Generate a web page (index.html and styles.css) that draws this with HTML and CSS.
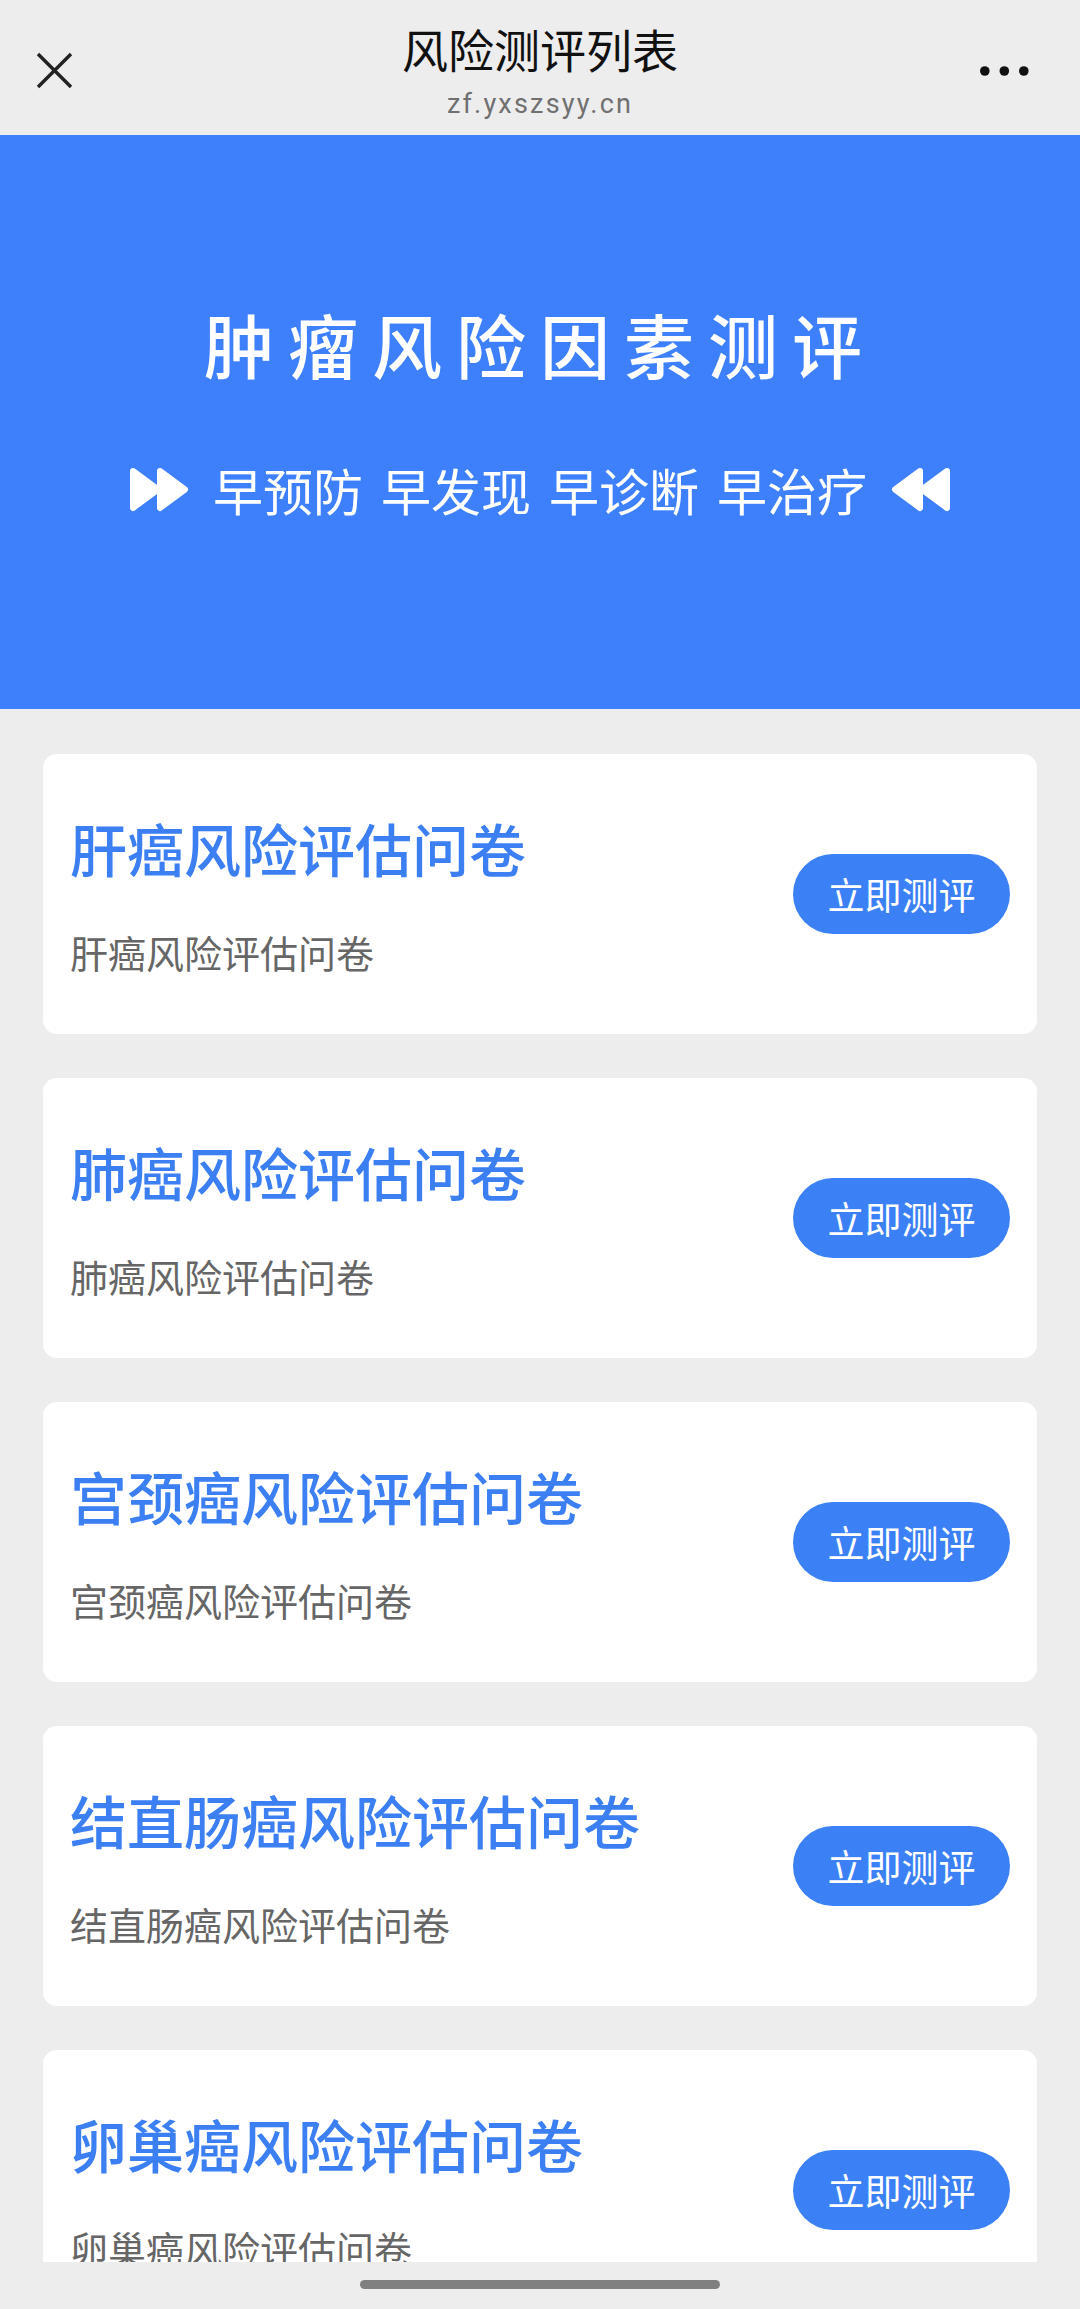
FILE: index.html
```html
<!DOCTYPE html>
<html lang="zh-CN">
<head>
<meta charset="utf-8">
<title>风险测评列表</title>
<link rel="stylesheet" href="styles.css">
</head>
<body>
<div class="screen">
  <header class="topbar">
    <div class="tb-left">
      <svg class="icon-close" width="37" height="37" viewBox="0 0 37 37"><path d="M2 2 L35 35 M35 2 L2 35" stroke="#222" stroke-width="3.4" fill="none"/></svg>
    </div>
    <div class="tb-center">
      <div class="tb-title">风险测评列表</div>
      <div class="tb-url">zf.yxszsyy.cn</div>
    </div>
    <div class="tb-right">
      <svg class="icon-more" width="49" height="10" viewBox="0 0 49 10"><circle cx="4.8" cy="5" r="4.8" fill="#111"/><circle cx="24.3" cy="5" r="4.8" fill="#111"/><circle cx="43.8" cy="5" r="4.8" fill="#111"/></svg>
    </div>
  </header>

  <section class="banner">
    <h1 class="banner-title">肿瘤风险因素测评</h1>
    <div class="banner-sub">
      <svg class="ff" width="60" height="45" viewBox="0 0 60 45"><path d="M4 4 L29 22.5 L4 41 Z M31 4 L56 22.5 L31 41 Z" fill="#fff" stroke="#fff" stroke-width="6" stroke-linejoin="round"/></svg>
      <div class="slogan"><span>早预防</span><span>早发现</span><span>早诊断</span><span>早治疗</span></div>
      <svg class="ff" width="60" height="45" viewBox="0 0 60 45"><path d="M56 4 L31 22.5 L56 41 Z M29 4 L4 22.5 L29 41 Z" fill="#fff" stroke="#fff" stroke-width="6" stroke-linejoin="round"/></svg>
    </div>
  </section>

  <main class="list">
    <div class="card">
      <div class="card-text">
        <div class="card-title">肝癌风险评估问卷</div>
        <div class="card-desc">肝癌风险评估问卷</div>
      </div>
      <button class="btn">立即测评</button>
    </div>
    <div class="card">
      <div class="card-text">
        <div class="card-title">肺癌风险评估问卷</div>
        <div class="card-desc">肺癌风险评估问卷</div>
      </div>
      <button class="btn">立即测评</button>
    </div>
    <div class="card">
      <div class="card-text">
        <div class="card-title">宫颈癌风险评估问卷</div>
        <div class="card-desc">宫颈癌风险评估问卷</div>
      </div>
      <button class="btn">立即测评</button>
    </div>
    <div class="card">
      <div class="card-text">
        <div class="card-title">结直肠癌风险评估问卷</div>
        <div class="card-desc">结直肠癌风险评估问卷</div>
      </div>
      <button class="btn">立即测评</button>
    </div>
    <div class="card">
      <div class="card-text">
        <div class="card-title">卵巢癌风险评估问卷</div>
        <div class="card-desc">卵巢癌风险评估问卷</div>
      </div>
      <button class="btn">立即测评</button>
    </div>
  </main>
</div>
<div class="sysbar"><div class="home-pill"></div></div>
</body>
</html>
```

FILE: styles.css
```css
* { box-sizing: border-box; }
html, body {
  margin: 0;
  padding: 0;
  background: #ededed;
  font-family: "Noto Sans CJK SC", "Noto Sans", sans-serif;
}
.screen {
  height: 2262px;
  overflow: hidden;
  background: #ededed;
}
.topbar {
  height: 135px;
  display: grid;
  grid-template-columns: 1fr auto 1fr;
  align-items: start;
  background: #ededed;
}
.tb-left {
  padding: 52px 0 0 36px;
  display: flex;
}
.tb-right {
  padding: 66px 51px 0 0;
  display: flex;
  justify-content: flex-end;
}
.tb-center {
  padding-top: 20px;
  display: flex;
  flex-direction: column;
  align-items: center;
}
.tb-title {
  font-size: 46px;
  line-height: 56px;
  color: #111;
}
.tb-url {
  margin-top: 10px;
  font-family: Roboto, "Noto Sans", sans-serif;
  font-size: 27px;
  line-height: 36px;
  letter-spacing: 2.2px;
  color: #707070;
}
.banner {
  height: 574px;
  background: #3e80fc;
  padding-top: 169px;
  display: flex;
  flex-direction: column;
  align-items: center;
}
.banner-title {
  margin: 0;
  font-size: 70px;
  line-height: 80px;
  letter-spacing: 14px;
  font-weight: 500;
  color: #fff;
}
.banner-sub {
  margin-top: 75px;
  height: 60px;
  display: flex;
  align-items: center;
  gap: 24px;
}
.slogan {
  display: flex;
  gap: 18px;
  font-size: 50px;
  line-height: 60px;
  color: #fff;
}
.list {
  padding: 45px 43px 0;
  display: flex;
  flex-direction: column;
  gap: 44px;
}
.card {
  height: 280px;
  background: #fff;
  border-radius: 14px;
  padding: 0 27px;
  display: flex;
  align-items: center;
  justify-content: space-between;
}
.card-text {
  display: flex;
  flex-direction: column;
  padding-top: 2px;
}
.card-title {
  font-size: 57px;
  line-height: 64px;
  font-weight: 500;
  color: #3b7ff3;
}
.card-desc {
  margin-top: 49px;
  font-size: 38px;
  line-height: 48px;
  color: #666;
}
.btn {
  width: 217px;
  height: 80px;
  border: none;
  border-radius: 40px;
  background: #3b80f5;
  color: #fff;
  font-family: "Noto Sans CJK SC", sans-serif;
  font-size: 37px;
  padding: 0;
  line-height: 80px;
}
.sysbar {
  height: 47px;
  background: #ededed;
  display: flex;
  justify-content: center;
  padding-top: 18px;
}
.home-pill {
  width: 360px;
  height: 9px;
  border-radius: 5px;
  background: #808080;
}
```
